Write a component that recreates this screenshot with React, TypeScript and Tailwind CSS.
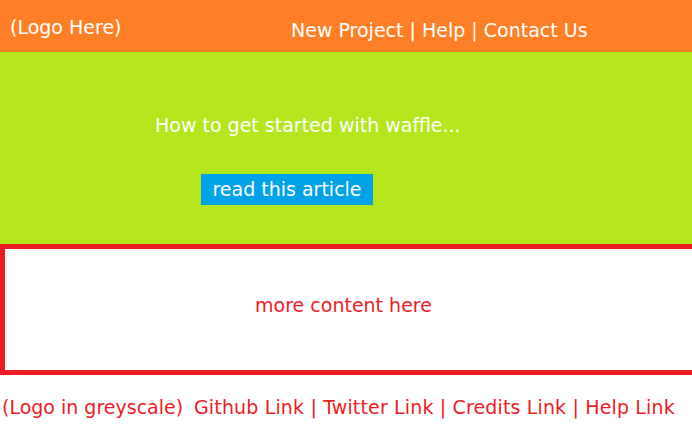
export default function App() {
  return (
    <div className="w-[692px] h-[433px] overflow-hidden bg-white font-['Comic_Sans_MS','DejaVu_Sans',sans-serif] text-[19px]">
      <header className="h-[52px] bg-[#ff7f27] flex text-white">
        <div className="w-[281px] pl-[10px] pt-[13px] leading-[28px]">(Logo Here)</div>
        <nav className="pl-[10px] pt-[16px] leading-[28px] whitespace-nowrap">
          New Project | Help | Contact Us
        </nav>
      </header>

      <section className="h-[192px] bg-[#b5e61d] flex flex-col">
        <h1 className="pl-[155px] pt-[59px] leading-[28px] text-white">How to get started with waffle...</h1>
        <div className="pl-[201px] pt-[35px]">
          <button className="h-[31px] w-[172px] bg-[#00a2e8] text-white leading-[31px]">
            read this article
          </button>
        </div>
      </section>

      <section className="h-[131px] border-[#ed1c24] border-l-[5px] border-t-[5px] border-b-[5px] flex items-center justify-center text-[#ed1c24]">
        <p className="pr-[10px] pb-[9px]">more content here</p>
      </section>

      <footer className="flex items-center h-[58px] pl-[2px] pt-[6px] text-[#ed1c24] whitespace-nowrap">
        <span className="w-[192px]">(Logo in greyscale)</span>
        <span className="tracking-[0.15px]">Github Link | Twitter Link | Credits Link | Help Link</span>
      </footer>
    </div>
  );
}
